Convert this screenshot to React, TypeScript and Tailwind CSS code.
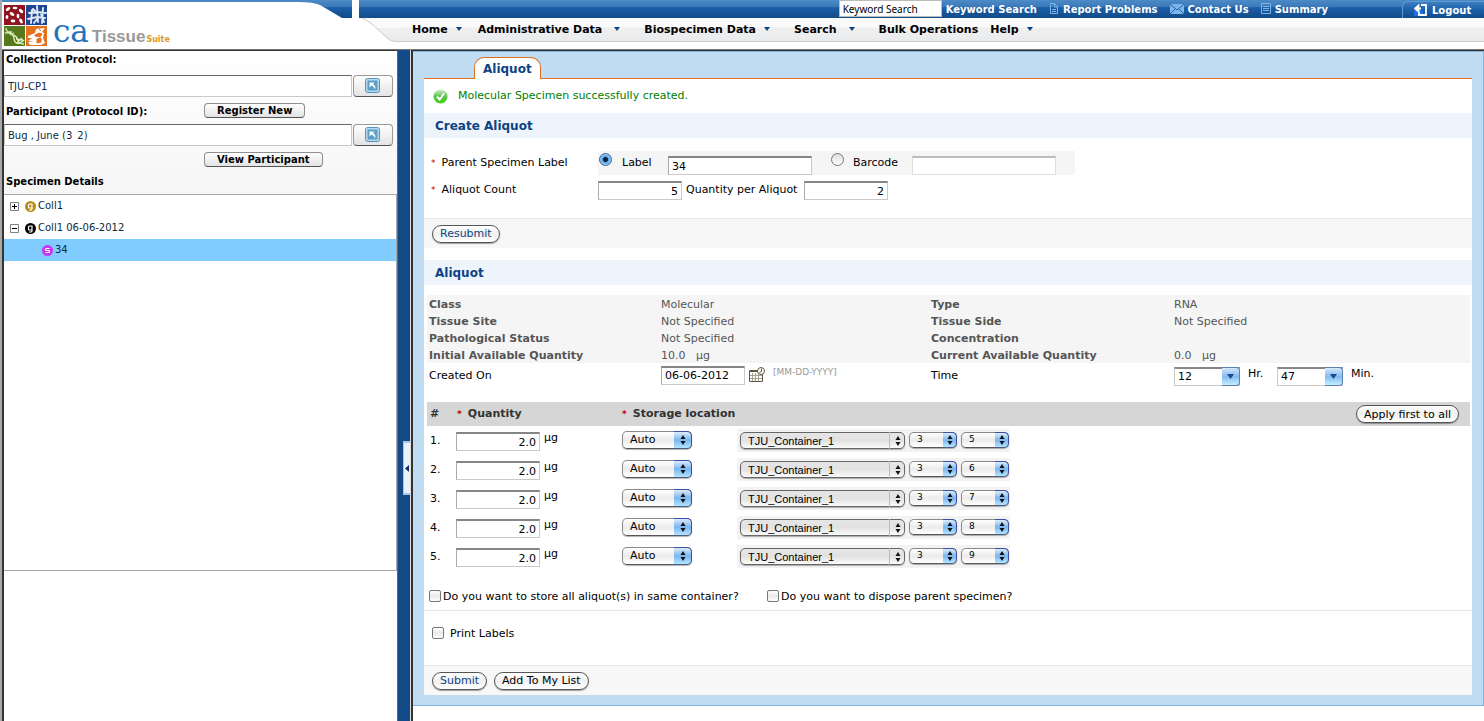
import React, { useState } from "react";

const FIELD =
  "border border-t-2 border-[#c9c9c9] border-t-[#868686] border-l-[#a9a9a9] bg-white px-[3px] text-[11px] outline-none";
const PILL =
  "h-[18px] rounded-full border border-[#555] bg-gradient-to-b from-white via-[#f0f0f0] to-white px-[7px] text-[11px] leading-none shadow-[0_1px_1px_rgba(0,0,0,0.35)]";
const SIDE_BUTTON =
  "h-[15px] rounded-[4px] border border-[#8f8f8f] border-b-[#555] bg-gradient-to-b from-white to-[#e3e3e3] px-3 text-[10px] font-bold leading-none";

function Logo() {
  return (
    <svg width="44" height="42" viewBox="0 0 44 42" aria-hidden="true">
      <rect width="21" height="20" fill="#8f1420" />
      <g fill="#fff">
        <ellipse cx="4" cy="4" rx="2.6" ry="1.4" transform="rotate(-35 4 4)" />
        <ellipse cx="11" cy="3" rx="2.4" ry="1.3" />
        <ellipse cx="17" cy="6" rx="2.6" ry="1.5" transform="rotate(40 17 6)" />
        <ellipse cx="8" cy="9" rx="2.6" ry="1.6" transform="rotate(35 8 9)" />
        <ellipse cx="14" cy="11" rx="1.4" ry="2.2" />
        <ellipse cx="3" cy="12" rx="1.4" ry="2" />
        <ellipse cx="9" cy="16" rx="2.4" ry="1.4" />
        <ellipse cx="17" cy="16" rx="1.5" ry="2.6" transform="rotate(-30 17 16)" />
      </g>
      <rect x="22" width="21" height="20" fill="#1f4691" />
      <g fill="none" stroke="#dfe9f8" strokeWidth="1.9" strokeLinecap="round">
        <path d="M28 5l-1 13M33 1l1 16M39 3l-1 15M25 8l9-1 8 1M24 14l9-2 8 1M29 4l4 4M37 9l3 8M30 18l3-4" />
      </g>
      <rect y="21" width="21" height="20" fill="#55791c" />
      <g fill="none" stroke="#dfeec0" strokeWidth="1.3">
        <path d="M2 23c0 7 9 5 11 10s1 6 7 6M1 28c6-1 9 2 9 6 1 5 5 6 10 1M3 27h5M6 30l4-2M12 34l7 1M13 38l5-5" />
      </g>
      <rect x="22" y="21" width="21" height="20" fill="#e8701c" />
      <path d="M28 33h-4v-2l7-3 1-4 9-1-3 4 2 1-1 5 2 5-4 2H26l-2-3h6l-6-1z" fill="#fff" />
      <path d="M31 30l4-2 3 1-2 3-5-1zM33 34l4-1v4l-4 1zM35 24l2 2" fill="#e8701c" stroke="#e8701c" />
    </svg>
  );
}

function DocIcon({ fold = false }: { fold?: boolean }) {
  return (
    <svg width="10" height="12" viewBox="0 0 10 12" fill="none" stroke="#7db4ea" aria-hidden="true">
      <path d={fold ? "M1.500 .5h4l3 3v7h-7zM5.500 1v3H8M3 6.500h4M3 8.500h4" : "M.5 .5h9v10h-9zM2 3.500h6M2 5.500h6M2 7.500h6"} />
    </svg>
  );
}

function MailIcon() {
  return (
    <svg width="14" height="10" viewBox="0 0 14 10" aria-hidden="true">
      <rect width="14" height="10" fill="#7db4ea" />
      <path d="M0 0l7 6 7-6M0 10l5-5M14 10L9 5" fill="none" stroke="#1f5fa8" />
    </svg>
  );
}

function LogoutIcon() {
  return (
    <svg width="14" height="13" viewBox="0 0 14 13" aria-hidden="true">
      <path d="M0 6h9v6H0z" fill="#1b6fe0" />
      <path d="M7 1h5v10H5V8M7 4.500H2M4.500 1.500v6L1 4.500z" fill="none" stroke="#fff" strokeWidth="1.800" />
    </svg>
  );
}

function CheckIcon() {
  return (
    <svg width="15" height="15" viewBox="0 0 15 15" aria-hidden="true">
      <defs>
        <linearGradient id="ok" x1="0" y1="0" x2="0" y2="1">
          <stop offset="0" stopColor="#d5efcf" />
          <stop offset=".5" stopColor="#5cc04f" />
          <stop offset="1" stopColor="#3fd414" />
        </linearGradient>
      </defs>
      <circle cx="7.500" cy="7.500" r="7" fill="url(#ok)" />
      <path d="M4 7.500L6.700 10.500 11 4.500" fill="none" stroke="#fff" strokeWidth="2" />
    </svg>
  );
}

function CalendarIcon() {
  return (
    <svg width="16" height="16" viewBox="0 0 16 16" aria-hidden="true">
      <path d="M.5 3.500h13v11H.5z" fill="#fff" stroke="#5b5a41" />
      <path d="M1 4.500h9" stroke="#5b5a41" />
      <path d="M3.500 6v8M6.500 6v8M9.500 6v8M1 8.500h12M1 11.500h12" stroke="#a5a493" />
      <circle cx="12" cy="4" r="3.500" fill="#fff" stroke="#5b5a41" />
      <path d="M12.500 1.500v3l-2 1" fill="none" stroke="#5b5a41" />
    </svg>
  );
}

function PickIcon() {
  return (
    <svg width="16" height="16" viewBox="0 0 16 16" aria-hidden="true">
      <rect x=".5" y=".5" width="14" height="14" rx="2" fill="#b5daef" stroke="#5b93b8" />
      <rect x="2.500" y="2.500" width="10" height="10" fill="#5b9fc8" />
      <path d="M4.500 4.500h5L8 6c2 1 3 3 2 5.500C9.500 9.500 8.500 8.500 6.500 7.500l-2 2z" fill="#fff" />
    </svg>
  );
}

function Toggle({ open }: { open: boolean }) {
  return (
    <svg width="9" height="9" viewBox="0 0 9 9" aria-hidden="true">
      <path d="M.5 .5h8v8h-8z" fill="#fff" stroke="#808080" />
      <path d={open ? "M2 4.500h5" : "M2 4.500h5M4.500 2v5"} stroke="#000" />
    </svg>
  );
}

function Badge({ letter, color }: { letter: string; color: string }) {
  return (
    <svg width="11" height="11" viewBox="0 0 11 11" aria-hidden="true">
      <circle cx="5.500" cy="5.500" r="5.500" fill={color} />
      {letter === "g" ? (
        <path d="M7 2.500v5.500q0 1-1 1H4M7 3H4.500q-1 0-1 1v2q0 1 1 1H7" fill="none" stroke="#fff" strokeWidth="1.200" />
      ) : (
        <path d="M7.500 3.500H4.500q-1 0-1 1t1 1h2q1 0 1 1t-1 1h-3" fill="none" stroke="#fff" strokeWidth="1.200" />
      )}
    </svg>
  );
}

function Caret() {
  return (
    <svg width="6" height="4" viewBox="0 0 6 4" aria-hidden="true" className="mb-[3px]">
      <path d="M0 0h6L3 4z" fill="#0d4384" />
    </svg>
  );
}

type PopupProps = { label: string; value: string; box: string; blue?: boolean; end?: string };

function Popup({ label, value, box, blue = true, end = "w-[18px]" }: PopupProps) {
  return (
    <span className={`relative inline-block align-top ${box}`}>
      <select
        aria-label={label}
        defaultValue={value}
        className={`block h-full w-full appearance-none rounded-[5px] border bg-gradient-to-b pl-[7px] shadow-[0_1px_1px_rgba(0,0,0,0.3)] outline-none ${
          blue
            ? "border-[#8a8a8a] border-b-[#555] from-white via-[#ebebeb] to-white"
            : "border-[#666] from-[#e6e6e6] via-[#e2e2e2] to-[#fbfbfb]"
        }`}
      >
        <option>{value}</option>
      </select>
      <span
        className={`pointer-events-none absolute inset-y-0 right-0 flex items-center justify-center ${end} ${
          blue
            ? "rounded-r-[5px] border border-l-0 border-[#3c4fa0] border-b-[#4a5f80] bg-gradient-to-b from-[#dcebfb] via-[#79b6ef] to-[#b5e4ff]"
            : "border-l border-[#bbb]"
        }`}
      >
        <svg width="6" height="10" viewBox="0 0 6 10" aria-hidden="true">
          <path d="M3 0l2.500 4h-5zM3 10l2.500-4h-5z" fill="#111" />
        </svg>
      </span>
    </span>
  );
}

function Combo({ label, value }: { label: string; value: string }) {
  return (
    <span className="relative inline-block h-[19px] w-[66px]">
      <select
        aria-label={label}
        defaultValue={value}
        className="block h-full w-full appearance-none border border-t-2 border-[#c9c9c9] border-t-[#868686] bg-white pl-[3px] outline-none"
      >
        <option>{value}</option>
      </select>
      <span className="pointer-events-none absolute inset-y-0 right-0 flex w-[18px] items-center justify-center rounded-r-[4px] border border-l-0 border-[#5b7fae] bg-gradient-to-b from-[#d5e8fa] via-[#84bcf0] to-[#c2efff]">
        <svg width="7" height="5" viewBox="0 0 7 5" aria-hidden="true">
          <path d="M0 0h7L3.500 5z" fill="#1c4a94" />
        </svg>
      </span>
    </span>
  );
}

function Star() {
  return <span className="inline-block w-[8px] pl-px text-[9px] text-[#c00000]">*</span>;
}

function Header() {
  const menu = [
    { name: "Home", caret: true, gap: "gap-2 mr-4" },
    { name: "Administrative Data", caret: true, gap: "gap-3 mr-6" },
    { name: "Biospecimen Data", caret: true, gap: "gap-2 mr-6" },
    { name: "Search", caret: true, gap: "gap-3 mr-6" },
    { name: "Bulk Operations", caret: false, gap: "mr-3" },
    { name: "Help", caret: true, gap: "gap-2" },
  ];
  const links = [
    { name: "Report Problems", icon: <DocIcon fold /> },
    { name: "Contact Us", icon: <MailIcon /> },
    { name: "Summary", icon: <DocIcon /> },
  ];
  return (
    <header className="flex h-[50px] border-b border-[#777] bg-white">
      <div className="relative mr-[7px] w-[350px] shrink-0 border-t-2 border-[#4a86c0]">
        <svg className="absolute right-0 -top-[2px]" width="54" height="18" viewBox="0 0 54 18" aria-hidden="true">
          <defs>
            <linearGradient id="bar" x1="0" y1="0" x2="0" y2="1">
              <stop offset="0" stopColor="#4d8bc7" />
              <stop offset=".38" stopColor="#3a78b8" />
              <stop offset=".42" stopColor="#1a60a9" />
              <stop offset="1" stopColor="#134b88" />
            </linearGradient>
          </defs>
          <path d="M0 0h54v18H44L22 5Q16 2 0 2z" fill="url(#bar)" />
        </svg>
        <div className="flex items-end pl-[2px] pt-[3px]">
          <Logo />
          <span className="ml-[5px] flex items-baseline font-bold leading-none">
            <span className="font-['DejaVu_Serif'] text-[31px] font-normal leading-[20px] text-[#2173bd]">ca</span>
            <span className="ml-[3px] font-['Liberation_Sans'] text-[17px] leading-[20px] text-[#999]">Tissue</span>
            <span className="ml-px text-[8px] text-[#dd981c]">Suite</span>
          </span>
        </div>
      </div>
      <div className="flex min-w-0 flex-1 flex-col">
        <div className="flex h-[18px] items-center justify-end bg-[linear-gradient(#4d8bc7,#3a78b8_38%,#1a60a9_42%,#134b88)] text-[10px] font-bold text-white">
          <input
            aria-label="Keyword Search"
            defaultValue="Keyword Search"
            className="h-[17px] w-[103px] self-start border border-[#bbb] bg-white px-[3px] font-['Noto_Sans'] text-[10px] font-normal text-black outline-none"
          />
          <a href="#search" className="ml-1">Keyword Search</a>
          {links.map((l) => (
            <a key={l.name} href="#link" className="ml-3 flex items-center gap-1">
              {l.icon}
              {l.name}
            </a>
          ))}
          <a
            href="#logout"
            className="ml-[74px] flex h-[17px] w-[82px] items-center gap-1 self-end rounded-tl-[6px] border-l border-t border-[#5d9ad6] bg-[linear-gradient(#3f7fc0,#1c62ad_45%,#134b88)] pl-[11px]"
          >
            <LogoutIcon />
            Logout
          </a>
        </div>
        <div className="flex h-[24px] items-stretch">
          <svg width="40" height="24" viewBox="0 0 40 24" className="shrink-0" aria-hidden="true">
            <defs>
              <linearGradient id="nav" x1="0" y1="0" x2="0" y2="1">
                <stop offset=".4" stopColor="#fafafa" />
                <stop offset=".42" stopColor="#f0f0f1" />
                <stop offset="1" stopColor="#e9eaeb" />
              </linearGradient>
            </defs>
            <path d="M3 0h37v24h-4Q31 23 27 19L13 6Q8 2 3 0z" fill="url(#nav)" />
            <path d="M3 0Q8 2 13 6L27 19Q31 23.500 36 23.500h4" fill="none" stroke="#ccc" />
          </svg>
          <nav className="flex flex-1 items-center border-b border-[#ccc] bg-[linear-gradient(#fafafa_40%,#f0f0f1_42%,#e9eaeb)] pl-[13px] pt-px text-[11px] font-bold">
            {menu.map((m) => (
              <a key={m.name} href="#menu" className={`flex items-center whitespace-nowrap ${m.gap}`}>
                {m.name}
                {m.caret && <Caret />}
              </a>
            ))}
          </nav>
        </div>
      </div>
    </header>
  );
}

function SideField({ id, value }: { id: string; value: string }) {
  return (
    <div className="flex items-center gap-px">
      <input id={id} defaultValue={value} className="h-[22px] min-w-0 flex-1 border border-[#c9c9c9] border-t-[#666] bg-white px-[3px] text-[10px] text-[#0d2a40] outline-none" />
      <button
        aria-label="Browse"
        className="mr-[4px] flex h-[22px] w-[40px] items-center justify-center rounded-[4px] border border-[#999] border-b-[#555] bg-gradient-to-b from-white to-[#e4e4e4]"
      >
        <PickIcon />
      </button>
    </div>
  );
}

function Sidebar() {
  return (
    <aside className="flex w-[396px] shrink-0 flex-col border-l-2 border-r border-t border-[#333] border-r-[#666]">
      <div className="flex flex-col bg-gradient-to-b from-white via-[#fafafa] to-[#f6f6f6] text-[10px] font-bold">
        <label htmlFor="protocol" className="flex h-[24px] items-start pl-[2px] pt-[2px] leading-[14px]">Collection Protocol:</label>
        <div className="font-normal"><SideField id="protocol" value="TJU-CP1" /></div>
        <div className="flex h-[27px] items-center pl-[2px]">
          <label htmlFor="participant" className="w-[198px] pt-px">Participant (Protocol ID):</label>
          <button className={SIDE_BUTTON}>Register New</button>
        </div>
        <div className="font-normal"><SideField id="participant" value="Bug , June (3_2)" /></div>
        <div className="flex h-[27px] items-center pl-[200px]">
          <button className={SIDE_BUTTON}>View Participant</button>
        </div>
        <h2 className="h-[21px] pl-[2px] leading-[18px]">Specimen Details</h2>
      </div>
      <ul className="h-[377px] border border-l-0 border-[#aaa] bg-white text-[10px] leading-[22px] text-[#0d2a40]">
        <li className="flex h-[22px] items-center pl-[6px]">
          <Toggle open={false} />
          <span className="ml-[6px] mr-[2px]"><Badge letter="g" color="#b58d1e" /></span>
          Coll1
        </li>
        <li className="flex h-[22px] items-center pl-[6px]">
          <Toggle open />
          <span className="ml-[6px] mr-[2px]"><Badge letter="g" color="#000" /></span>
          Coll1 06-06-2012
        </li>
        <li className="flex h-[22px] items-center bg-[#80ccff] pl-[38px]">
          <span className="mr-[2px]"><Badge letter="s" color="#c935f2" /></span>
          34
        </li>
      </ul>
    </aside>
  );
}

function SectionTitle({ children }: { children: React.ReactNode }) {
  return <h2 className="h-[25px] bg-[#edf4fb] pl-[11px] text-[12px] font-bold leading-[26px] text-[#0d4384]">{children}</h2>;
}

function Radio({ id, checked, onChange }: { id: string; checked: boolean; onChange: () => void }) {
  return (
    <input
      id={id}
      type="radio"
      name="parent"
      checked={checked}
      onChange={onChange}
      className="mb-[7px] size-[13px] appearance-none rounded-full border border-[#777] bg-gradient-to-b from-[#ddd] to-white checked:border-[#3d6190] checked:bg-[radial-gradient(circle,#0a1e3c_2px,#5ea6e6_3px,#c5ecff)]"
    />
  );
}

function Check({ id }: { id: string }) {
  return (
    <input
      id={id}
      type="checkbox"
      className="mb-[2px] size-[12px] appearance-none rounded-[2px] border border-[#777] bg-gradient-to-b from-white via-[#e8e8e8] to-white checked:bg-[#79b6ef]"
    />
  );
}

function CreateForm() {
  const [by, setBy] = useState("label");
  return (
    <div className="h-[80px] pt-[13px]">
      <div className="flex h-[24px] items-center">
        <span className="w-[174px] pl-[6px]"><Star /> <label htmlFor="lbl">Parent Specimen Label</label></span>
        <div className="flex h-full w-[477px] items-center bg-[#f5f5f5] pl-[1px]">
          <Radio id="byLabel" checked={by === "label"} onChange={() => setBy("label")} />
          <label htmlFor="byLabel" className="ml-[10px] w-[46px]">Label</label>
          <input id="lbl" defaultValue="34" className={`${FIELD} mt-[5px] h-[19px] w-[144px]`} />
          <span className="ml-[19px] flex"><Radio id="byBarcode" checked={by === "barcode"} onChange={() => setBy("barcode")} /></span>
          <label htmlFor="byBarcode" className="ml-[9px] w-[59px]">Barcode</label>
          <input aria-label="Barcode value" disabled={by !== "barcode"} className={`${FIELD} mt-[5px] h-[19px] w-[144px] disabled:border-[#ddd] disabled:border-t-[#bbb]`} />
        </div>
      </div>
      <div className="mt-[6px] flex h-[19px] items-center">
        <span className="w-[174px] pl-[6px]"><Star /> <label htmlFor="count">Aliquot Count</label></span>
        <input id="count" defaultValue="5" className={`${FIELD} h-[19px] w-[84px] text-right`} />
        <label htmlFor="per" className="w-[122px] pl-[4px]">Quantity per Aliquot</label>
        <input id="per" defaultValue="2" className={`${FIELD} h-[19px] w-[84px] text-right`} />
      </div>
    </div>
  );
}

function Details() {
  const rows = [
    ["Class", "Molecular", "Type", "RNA"],
    ["Tissue Site", "Not Specified", "Tissue Side", "Not Specified"],
    ["Pathological Status", "Not Specified", "Concentration", ""],
    ["Initial Available Quantity", "10.0 \u00a0 \u00b5g", "Current Available Quantity", "0.0 \u00a0 \u00b5g"],
  ];
  return (
    <table className="w-full table-fixed">
      <colgroup>
        <col className="w-[234px]" />
        <col className="w-[270px]" />
        <col className="w-[243px]" />
        <col />
      </colgroup>
      <tbody>
        {rows.map((r) => (
          <tr key={r[0]} className="bg-[#f5f5f5] leading-[15px] text-[#555]">
            <th scope="row" className="pl-[2px] pt-[2px] text-left">{r[0]}</th>
            <td className="pt-[2px]">{r[1]}</td>
            <th scope="row" className="pt-[2px] text-left">{r[2]}</th>
            <td className="pt-[2px]">{r[3]}</td>
          </tr>
        ))}
        <tr className="h-[26px]">
          <td className="pl-[2px] pt-px"><label htmlFor="created">Created On</label></td>
          <td>
            <div className="flex items-center pb-[2px]">
              <input id="created" defaultValue="06-06-2012" className={`${FIELD} h-[19px] w-[84px]`} />
              <button aria-label="Pick a date" className="ml-1"><CalendarIcon /></button>
              <span className="mb-1 ml-2 text-[9px] text-[#999]">[MM-DD-YYYY]</span>
            </div>
          </td>
          <td className="pt-px">Time</td>
          <td>
            <div className="flex items-center">
              <Combo label="Hour" value="12" />
              <span className="mb-1 ml-2 w-[29px]">Hr.</span>
              <Combo label="Minute" value="47" />
              <span className="mb-1 ml-2">Min.</span>
            </div>
          </td>
        </tr>
      </tbody>
    </table>
  );
}

function Aliquots() {
  return (
    <table className="mt-[13px] w-full table-fixed">
      <colgroup>
        <col className="w-[29px]" />
        <col className="w-[165px]" />
        <col className="w-[116px]" />
        <col />
      </colgroup>
      <thead>
        <tr className="h-[24px] bg-[#d6d6d6] text-left text-[#333]">
          <th className="pl-[3px] pt-px">#</th>
          <th className="pt-px"><Star />&nbsp;Quantity</th>
          <th colSpan={2}>
            <div className="flex items-center justify-between pr-[11px]">
              <span className="whitespace-nowrap pt-px"><Star />&nbsp;Storage location</span>
              <button className={`${PILL} font-normal text-black`}>Apply first to all</button>
            </div>
          </th>
        </tr>
      </thead>
      <tbody>
        {[5, 6, 7, 8, 9].map((pos, i) => (
          <tr key={pos} className="h-[29px]">
            <td className="pl-[3px] pt-[2px]">{i + 1}.</td>
            <td>
              <div className="flex items-start gap-1">
                <input aria-label={`Quantity ${i + 1}`} defaultValue="2.0" className={`${FIELD} mt-[2px] h-[19px] w-[84px] text-right`} />
                <span className="leading-[16px]">µg</span>
              </div>
            </td>
            <td className="pb-[2px] pl-[1px]">
              <Popup label={`Storage ${i + 1}`} value="Auto" box="h-[18px] w-[70px]" />
            </td>
            <td>
              <div className="flex h-[23px] w-[273px] items-start gap-[4px] bg-[#f3f3f3] pl-[3px] pt-[3px]">
                <Popup label={`Container ${i + 1}`} value="TJU_Container_1" blue={false} end="w-[16px]" box="h-[17px] w-[165px] font-['Liberation_Sans'] text-[11px]" />
                <Popup label={`Row ${i + 1}`} value="3" end="w-[14px]" box="h-[16px] w-[48px] text-[9px]" />
                <Popup label={`Column ${i + 1}`} value={String(pos)} end="w-[14px]" box="h-[16px] w-[48px] text-[9px]" />
              </div>
            </td>
          </tr>
        ))}
      </tbody>
    </table>
  );
}

export default function App() {
  return (
    <div className="flex min-h-screen flex-col border-l-2 border-[#a9a9a9] bg-white font-['DejaVu_Sans',sans-serif] text-[11px] text-black">
      <Header />
      <div className="flex flex-1">
        <Sidebar />
        <div className="flex w-[13px] shrink-0 justify-end border-r border-[#ddd] bg-[#134b88]">
          <button
            aria-label="Collapse panel"
            className="mt-[391px] flex h-[54px] w-[7px] items-center justify-center border-y-2 border-l border-[#a9c4ea] bg-[#eaf2fd]"
          >
            <svg width="4" height="7" viewBox="0 0 4 7" aria-hidden="true">
              <path d="M4 0v7L0 3.500z" fill="#0d2f66" />
            </svg>
          </button>
        </div>
        <main className="flex min-w-0 flex-1 flex-col border-l-2 border-t border-[#333]">
          <div className="border border-l-0 border-[#84b4da] bg-[#bfdcf2] pb-[10px] pl-[11px] pr-[11px] pt-[5px]">
            <div className="flex h-[22px] items-end">
              <span className="h-px w-[50px] bg-[#e07020]" />
              <a href="#aliquot" className="h-[22px] rounded-t-[10px] border border-b-0 border-[#e07020] bg-white px-[8px] text-[12px] font-bold leading-[23px] text-[#0d4384]">
                Aliquot
              </a>
              <span className="h-px flex-1 bg-[#e07020]" />
            </div>
            <form className="bg-white" onSubmit={(e) => e.preventDefault()}>
              <p className="flex h-[34px] items-center gap-[10px] pl-[9px] text-[#008000]">
                <CheckIcon />
                Molecular Specimen successfully created.
              </p>
              <SectionTitle>Create Aliquot</SectionTitle>
              <CreateForm />
              <div className="flex h-[30px] items-center border-t border-[#e8e8e8] bg-[#f7f7f7] pl-[8px]">
                <button className={`${PILL} text-[#0d4384]`}>Resubmit</button>
              </div>
              <div className="h-[12px]" />
              <SectionTitle>Aliquot</SectionTitle>
              <div className="pl-[3px] pr-[2px] pt-[10px]">
                <Details />
                <Aliquots />
              </div>
              <div className="flex h-[40px] items-end border-b border-[#e8e8e8] pb-[5px] pl-[5px]">
                <div className="flex w-[338px] items-center gap-[2px]">
                  <Check id="same" />
                  <label htmlFor="same">Do you want to store all aliquot(s) in same container?</label>
                </div>
                <div className="flex items-center gap-[2px]">
                  <Check id="dispose" />
                  <label htmlFor="dispose">Do you want to dispose parent specimen?</label>
                </div>
              </div>
              <div className="flex h-[54px] items-center gap-[6px] pb-[8px] pl-[8px]">
                <Check id="print" />
                <label htmlFor="print">Print Labels</label>
              </div>
              <div className="flex h-[30px] items-center gap-[7px] border-t border-[#e8e8e8] bg-[#f7f7f7] pl-[8px]">
                <button className={`${PILL} text-[#0d4384]`}>Submit</button>
                <button className={PILL}>Add To My List</button>
              </div>
            </form>
          </div>
        </main>
      </div>
    </div>
  );
}
